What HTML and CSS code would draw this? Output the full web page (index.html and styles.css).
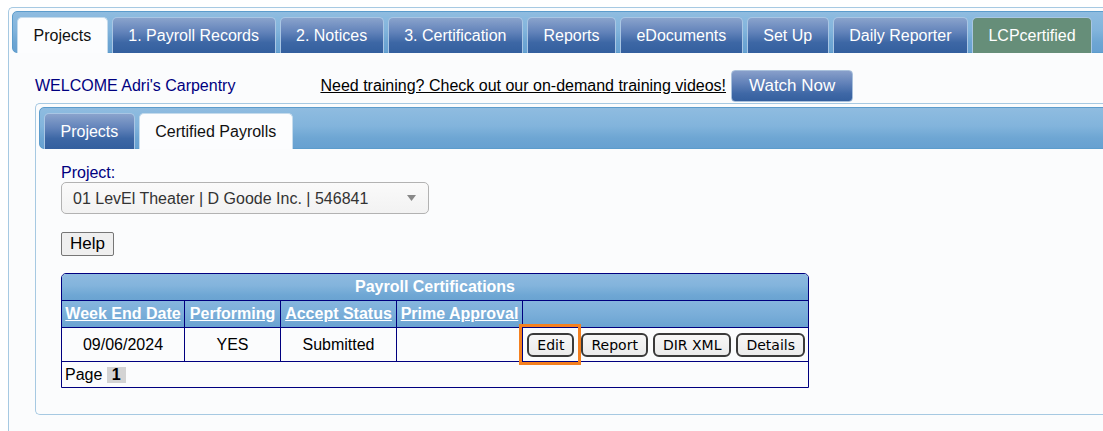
FILE: index.html
```html
<!DOCTYPE html>
<html lang="en">
<head>
<meta charset="utf-8">
<title>Certified Payrolls</title>
<link rel="stylesheet" href="styles.css">
</head>
<body>
<div class="tabs tabs-main">
  <ul class="tab-nav">
    <li class="tab tab-active">Projects</li>
    <li class="tab">1. Payroll Records</li>
    <li class="tab">2. Notices</li>
    <li class="tab">3. Certification</li>
    <li class="tab">Reports</li>
    <li class="tab">eDocuments</li>
    <li class="tab">Set Up</li>
    <li class="tab">Daily Reporter</li>
    <li class="tab tab-green">LCPcertified</li>
  </ul>
  <div class="tab-panel main-panel">
    <div class="welcome-row">
      <span class="welcome">WELCOME Adri's Carpentry</span>
      <a class="training-link" href="#">Need training? Check out our on-demand training videos!</a>
      <button class="watch-btn" type="button">Watch Now</button>
    </div>

    <div class="tabs tabs-sub">
      <ul class="tab-nav">
        <li class="tab">Projects</li>
        <li class="tab tab-active">Certified Payrolls</li>
      </ul>
      <div class="tab-panel cp-panel">
        <label class="field-label" for="project">Project:</label>
        <select id="project" class="project-select">
          <option>01 LevEl Theater | D Goode Inc. | 546841</option>
        </select>
        <div class="help-row">
          <button class="help-btn" type="button">Help</button>
        </div>

        <table class="cert-table">
          <colgroup>
            <col class="c1"><col class="c2"><col class="c3"><col class="c4"><col class="c5">
          </colgroup>
          <thead>
            <tr><th class="caption" colspan="5">Payroll Certifications</th></tr>
            <tr class="head-row">
              <th><a href="#">Week End Date</a></th>
              <th><a href="#">Performing</a></th>
              <th><a href="#">Accept Status</a></th>
              <th><a href="#">Prime Approval</a></th>
              <th></th>
            </tr>
          </thead>
          <tbody>
            <tr class="data-row">
              <td>09/06/2024</td>
              <td>YES</td>
              <td>Submitted</td>
              <td></td>
              <td class="actions">
                <div class="action-list">
                  <span class="focused"><button class="row-btn" type="button">Edit</button></span>
                  <button class="row-btn" type="button">Report</button>
                  <button class="row-btn" type="button">DIR XML</button>
                  <button class="row-btn" type="button">Details</button>
                </div>
              </td>
            </tr>
            <tr class="pager-row">
              <td colspan="5">Page <span class="page-current">1</span></td>
            </tr>
          </tbody>
        </table>
      </div>
    </div>
  </div>
</div>
</body>
</html>
```

FILE: styles.css
```css
html, body {
  margin: 0;
  background: #ffffff;
}

body {
  padding: 7px 0 0 8px;
  overflow: hidden;
  height: 431px;
  box-sizing: border-box;
  font-family: "Liberation Sans", Arial, sans-serif;
  font-size: 16px;
  color: #000;
}

/* tab containers */
.tabs {
  border: 1px solid #a6c9e2;
  border-radius: 5px;
  padding: 3px;
  background: #fbfcfd;
}

.tabs-main {
  margin-right: -20px;
  min-height: 480px;
  border-right: 0;
}

.tabs-sub {
  margin-top: 1px;
  margin-right: -40px;
  border-right: 0;
}

.tab-nav {
  display: flex;
  gap: 4px;
  margin: 0;
  padding: 5px 4px 0;
  list-style: none;
  border: 1px solid #5c9ccc;
  border-radius: 5px;
  background: linear-gradient(180deg, #8fbce0 0%, #82b4dc 45%, #6ea6d3 75%, #67a1d1 100%);
}

.tab {
  display: flex;
  align-items: center;
  box-sizing: border-box;
  height: 36px;
  margin-bottom: -1px;
  padding: 0 15.5px;
  border: 1px solid #a9c6e4;
  border-bottom: 0;
  border-radius: 5px 5px 0 0;
  background: linear-gradient(180deg, #8aa3cc 0%, #6283ba 40%, #3d67a5 70%, #335f9e 100%);
  color: #ffffff;
  white-space: nowrap;
}

.tab-active {
  background: #fcfdfe;
  border-color: #c5dbec;
  color: #111;
}

.tab-green {
  background: #668e79;
  border-color: #a9c6e4;
}

/* main panel */
.main-panel {
  padding: 17px 0 0 23px;
}

.welcome-row {
  display: flex;
  align-items: center;
}

.welcome {
  color: #000080;
}

.training-link {
  margin-left: 85px;
  color: #000;
  text-decoration: underline;
}

.watch-btn {
  margin-left: 5px;
  height: 32px;
  padding: 0 17px;
  border: 1px solid #a9c1dc;
  border-radius: 4px;
  background: linear-gradient(180deg, #889fca 0%, #6282b9 40%, #3f68a6 75%, #345f9e 100%);
  color: #fff;
  font-family: "Liberation Sans", Arial, sans-serif;
  font-size: 17px;
}

/* certified payrolls panel */
.cp-panel {
  padding: 15px 0 23px 22px;
}

.field-label {
  display: block;
  color: #000080;
  line-height: 18px;
}

.project-select {
  display: block;
  margin-top: 0;
  width: 368px;
  height: 32px;
  padding: 0 30px 0 11px;
  border: 1px solid #b2b2b2;
  border-radius: 5px;
  -webkit-appearance: none;
  appearance: none;
  background:
    url("data:image/svg+xml;utf8,<svg xmlns='http://www.w3.org/2000/svg' width='9' height='6'><path d='M0 0h9L4.5 6z' fill='%23888'/></svg>") no-repeat right 12px center,
    linear-gradient(180deg, #fafafa 0%, #f2f2f2 100%);
  color: #333;
  font-family: "Liberation Sans", Arial, sans-serif;
  font-size: 16px;
}

.help-row {
  margin-top: 18px;
}

.help-btn {
  height: 24px;
  padding: 0 8px;
  border: 1px solid #767676;
  border-radius: 2px;
  background: #efefef;
  color: #000;
  font-family: "Liberation Sans", Arial, sans-serif;
  font-size: 17px;
  line-height: 20px;
}

/* certifications grid */
.cert-table {
  margin-top: 17px;
  width: 748px;
  box-sizing: border-box;
  table-layout: fixed;
  border-collapse: separate;
  border-spacing: 0;
  border: 1px solid #00007f;
  border-radius: 5px 5px 0 0;
  background: #fbfcfd;
}

.c1 { width: 122px; }
.c2 { width: 96px; }
.c3 { width: 116px; }
.c4 { width: 126px; }

.cert-table th,
.cert-table td {
  padding: 0 2px;
  text-align: center;
  white-space: nowrap;
  font-weight: normal;
}

.cert-table .caption {
  height: 26px;
  border-bottom: 1px solid #00007f;
  border-radius: 4px 4px 0 0;
  background: linear-gradient(180deg, #8ebae0 0%, #83b4dc 45%, #6fa7d4 80%, #6aa3d1 100%);
  color: #fff;
  font-weight: bold;
}

.head-row th {
  height: 26px;
  border-bottom: 1px solid #00007f;
  background: linear-gradient(180deg, #86b6de 0%, #7aaed9 50%, #6aa3d1 100%);
}

.head-row th + th,
.data-row td + td {
  border-left: 1px solid #00007f;
}

.head-row a {
  color: #fff;
  font-weight: bold;
  text-decoration: underline;
}

.data-row td {
  height: 33px;
  border-bottom: 1px solid #00007f;
}

.cert-table td.actions {
  padding: 0 3px 0 4px;
}

.action-list {
  display: flex;
  justify-content: flex-end;
  align-items: center;
  gap: 5px;
}

.focused {
  position: relative;
  display: inline-flex;
  margin-right: 2px;
}

.focused::after {
  content: "";
  position: absolute;
  top: -9px;
  left: -8px;
  right: -7px;
  bottom: -8px;
  border: 3px solid #f4801f;
  pointer-events: none;
}

.row-btn {
  height: 24px;
  padding: 0 8px;
  border: 2px solid #3a3a3a;
  border-radius: 6px;
  background: linear-gradient(180deg, #f7f7f7 0%, #ebebeb 100%);
  color: #000;
  font-family: "DejaVu Sans", Verdana, sans-serif;
  font-size: 14px;
  line-height: 18px;
}

.pager-row td {
  height: 25px;
  padding-left: 3px;
  text-align: left;
}

.page-current {
  display: inline-block;
  padding: 0 5px;
  line-height: 16px;
  background: #d3d3d3;
  font-weight: bold;
}
```
